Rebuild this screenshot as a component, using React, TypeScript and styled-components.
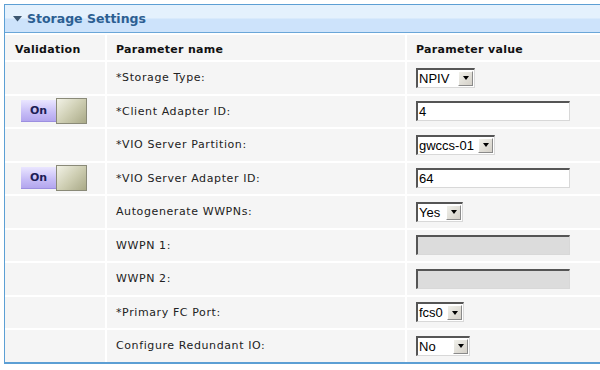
import styled, {createGlobalStyle} from "styled-components";

const Global = createGlobalStyle`
    html, body{
        margin: 0;
        padding: 0;
        background: #fff;
        overflow: hidden;
    }
    body{
        font-family: "DejaVu Sans", Verdana, sans-serif;
    }
`

const Panel = styled.div`
    margin: 4px 0 0 4px;
    width: 600px;
    border-top: 1px solid #5c9fd4;
    border-left: 1px solid #5c9fd4;
    border-bottom: 2px solid #5c9fd4;
    background: #fff;
`

const Header = styled.div`
    height: 27px;
    display: flex;
    align-items: center;
    gap: 5px;
    padding-left: 8px;
    background: linear-gradient(#e4f1fd 0%, #e4f1fd 48%, #cde3fb 52%, #cde3fb 100%);
    border-bottom: 1px solid #6aa6d8;
    box-shadow: 0 1px 0 #fff;
    margin-bottom: 2px;
    font-size: 12.5px;
    font-weight: bold;
    color: #2c5f92;
    svg{
        flex: none;
    }
`

const Grid = styled.div`
    display: grid;
    grid-template-columns: 100px 298px 1fr;
    grid-template-rows: 25px;
    grid-auto-rows: 31.5px;
    gap: 2px;
    background: #fff;
`

const Cell = styled.div<{ $head?: boolean; $pad?: number }>`
    background: #f5f5f5;
    display: flex;
    align-items: center;
    box-sizing: border-box;
    padding-left: ${p => p.$pad ?? 9}px;
    padding-top: ${p => p.$head ? 4 : 0}px;
    font-size: 11px;
    letter-spacing: ${p => p.$head ? "0.3px" : "0.6px"};
    color: ${p => p.$head ? "#111" : "#222"};
    font-weight: ${p => p.$head ? "bold" : "normal"};
`

const Switch = styled.div`
    display: flex;
    align-items: center;
    letter-spacing: 0;
    .on{
        width: 35px;
        height: 22px;
        box-sizing: border-box;
        display: flex;
        align-items: center;
        justify-content: center;
        background: linear-gradient(#eae6ff, #c6bcf6 60%, #b3a6ee);
        border-bottom: 1px solid #9c8fe0;
        font-size: 11px;
        font-weight: bold;
        color: #1d1d55;
    }
    .knob{
        width: 31px;
        height: 26px;
        box-sizing: border-box;
        border: 1px solid #8a8a78;
        background: linear-gradient(135deg, #f2f2e6, #cfcfb4 50%, #a9a987);
    }
`

const Field = styled.div<{ $w: number; $disabled?: boolean }>`
    width: ${p => p.$w}px;
    height: 20px;
    box-sizing: border-box;
    border-top: 2px solid #555;
    border-left: 2px solid #555;
    border-right: 1px solid #d8d8d8;
    border-bottom: 1px solid #d8d8d8;
    background: ${p => p.$disabled ? "#dcdcdc" : "#fff"};
    display: flex;
    align-items: center;
    justify-content: space-between;
    font-family: "Liberation Sans", Arial, sans-serif;
    font-size: 13px;
    letter-spacing: 0;
    color: #000;
    span{
        padding-left: 1px;
    }
`

const Arrow = styled.div`
    width: 15px;
    height: 15px;
    margin-right: 1px;
    box-sizing: border-box;
    background: linear-gradient(135deg, #f0f0ea, #d4d0c8);
    border-right: 1px solid #8a8a8a;
    border-bottom: 1px solid #8a8a8a;
    border-top: 1px solid #fff;
    border-left: 1px solid #fff;
    display: flex;
    align-items: center;
    justify-content: center;
    &::after{
        content: "";
        border-left: 3.5px solid transparent;
        border-right: 3.5px solid transparent;
        border-top: 4px solid #000;
    }
`

type Row = {
    label: string;
    kind: "select" | "text" | "empty";
    value?: string;
    w?: number;
    toggle?: boolean;
}

const rows: Row[] = [
    {label: "*Storage Type:", kind: "select", value: "NPIV", w: 59},
    {label: "*Client Adapter ID:", kind: "text", value: "4", toggle: true},
    {label: "*VIO Server Partition:", kind: "select", value: "gwccs-01", w: 79},
    {label: "*VIO Server Adapter ID:", kind: "text", value: "64", toggle: true},
    {label: "Autogenerate WWPNs:", kind: "select", value: "Yes", w: 47},
    {label: "WWPN 1:", kind: "empty"},
    {label: "WWPN 2:", kind: "empty"},
    {label: "*Primary FC Port:", kind: "select", value: "fcs0", w: 48},
    {label: "Configure Redundant IO:", kind: "select", value: "No", w: 54},
]

export default function App(){
    return <>
        <Global/>
        <Panel>
            <Header>
                <svg width="9" height="6" viewBox="0 0 9 6">
                    <path d="M0 0 L9 0 L4.5 5.5 Z" fill="#3d5770"/>
                </svg>
                <span>Storage Settings</span>
            </Header>
            <Grid>
                <Cell $head $pad={10}>Validation</Cell>
                <Cell $head>Parameter name</Cell>
                <Cell $head>Parameter value</Cell>
                {
                    rows.map((item, index) => (<>
                        <Cell key={"v" + index} $pad={16}>
                            {item.toggle && <Switch>
                                <div className="on">On</div>
                                <div className="knob"/>
                            </Switch>}
                        </Cell>
                        <Cell key={"n" + index}>{item.label}</Cell>
                        <Cell key={"c" + index}>
                            {item.kind === "select" && <Field $w={item.w ?? 60}>
                                <span>{item.value}</span>
                                <Arrow/>
                            </Field>}
                            {item.kind === "text" && <Field $w={154}>
                                <span>{item.value}</span>
                            </Field>}
                            {item.kind === "empty" && <Field $w={154} $disabled/>}
                        </Cell>
                    </>))
                }
            </Grid>
        </Panel>
    </>
}
